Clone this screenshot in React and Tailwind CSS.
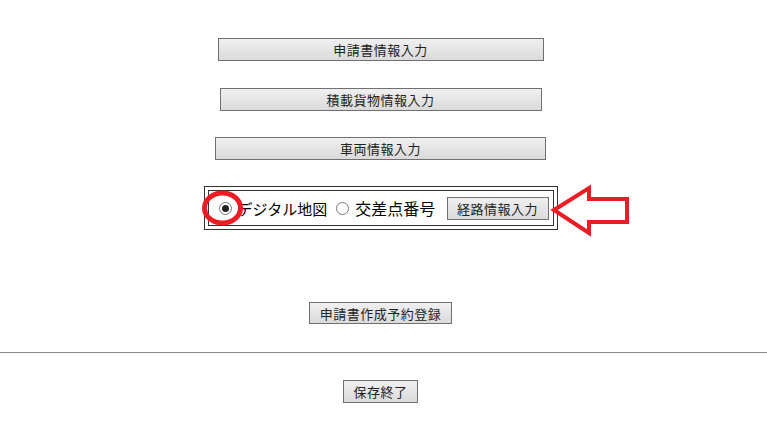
import React from "react";

const font = { fontFamily: '"Noto Sans CJK JP", "Noto Sans", sans-serif' };

function Btn({ className = "", children }) {
  return (
    <button
      className={
        "flex items-center justify-center border border-[#707070] bg-gradient-to-b from-[#f0f0f0] to-[#dadada] text-[13px] leading-none text-[#222] tracking-[0.5px] " +
        className
      }
    >
      {children}
    </button>
  );
}

function Radio({ checked }) {
  return (
    <span className="flex h-[13px] w-[13px] items-center justify-center rounded-full border border-[#777] bg-white">
      {checked && <span className="h-[7px] w-[7px] rounded-full bg-[#222]" />}
    </span>
  );
}

export default function App() {
  return (
    <div className="relative min-h-[428px] w-[767px] bg-white" style={font}>
      <div className="flex flex-col items-center pt-[38px] pr-[6px]">
        <Btn className="h-[23px] w-[326px]">申請書情報入力</Btn>
        <Btn className="mt-[27px] h-[23px] w-[322px]">積載貨物情報入力</Btn>
        <Btn className="mt-[26px] h-[23px] w-[331px]">車両情報入力</Btn>
        <div className="mt-[26px] border border-[#333] p-[3px]">
          <div className="flex h-[36px] w-[346px] items-center border border-[#333] pl-[10px] pr-[4px]">
            <Radio checked />
            <span className="ml-[6px] text-[15px] leading-none text-black">デジタル地図</span>
            <span className="ml-[9px]"><Radio /></span>
            <span className="ml-[6px] text-[16px] leading-none text-black">交差点番号</span>
            <Btn className="ml-auto h-[23px] w-[102px]">経路情報入力</Btn>
          </div>
        </div>
        <Btn className="mt-[72px] h-[22px] w-[143px]">申請書作成予約登録</Btn>
      </div>
      <div className="mt-[28px] h-px w-full bg-[#888]" />
      <div className="flex justify-center pr-[6px] pt-[27px]">
        <Btn className="h-[23px] w-[75px]">保存終了</Btn>
      </div>

      <svg className="pointer-events-none absolute left-0 top-0" width="767" height="428">
        <ellipse cx="222.5" cy="208" rx="18" ry="15" fill="none" stroke="#ec1c24" strokeWidth="5" />
        <polygon
          points="554,210 589,188 589,199 627,199 627,222 589,222 589,233"
          fill="none"
          stroke="#ec1c24"
          strokeWidth="4"
          strokeLinejoin="miter"
        />
      </svg>
    </div>
  );
}
